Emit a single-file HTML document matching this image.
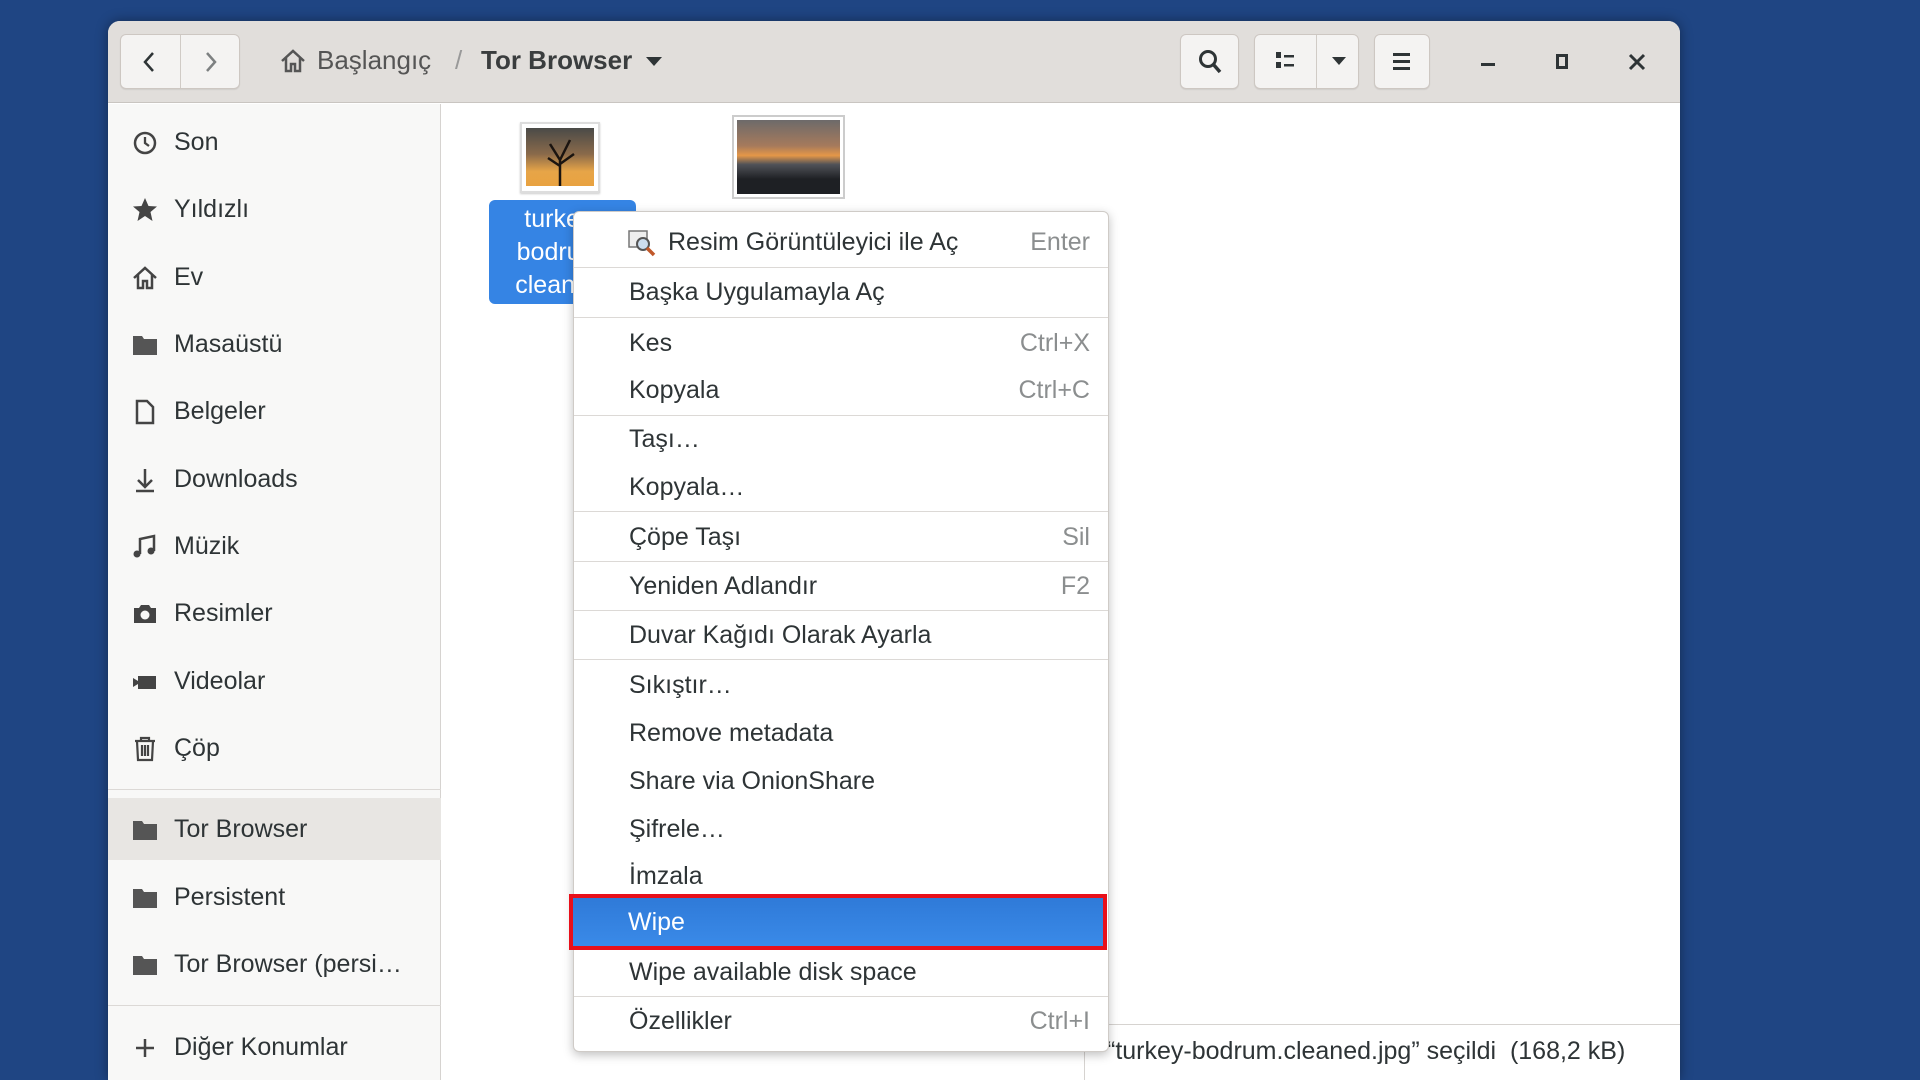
<!DOCTYPE html>
<html><head><meta charset="utf-8"><style>
*{margin:0;padding:0;box-sizing:border-box}
body{width:1920px;height:1080px;background:#1f4583;font-family:"Liberation Sans",sans-serif;position:relative;overflow:hidden;color:#2e3436}
.abs{position:absolute}
#win{left:108px;top:21px;width:1572px;height:1059px;background:#fff;border-radius:12px 12px 0 0;overflow:hidden;box-shadow:0 0 12px rgba(0,0,0,.4)}
#hdr{left:0;top:0;width:1572px;height:82px;background:#e1dedb;border-bottom:1px solid #c9c5c1}
.btn{position:absolute;background:#f4f3f2;border:1px solid #cdc7c2;border-radius:6px;box-shadow:0 1px 1px rgba(0,0,0,.08)}
#side{left:0;top:83px;width:333px;height:976px;background:#f8f8f7;border-right:1px solid #d6d3d0}
.si{position:absolute;left:0;width:333px;height:62px;font-size:25px;line-height:62px;padding-left:66px}
.si svg{position:absolute;left:24px;top:19px}
.sep{position:absolute;height:1px;background:#dcd9d6}
#menu{left:573px;top:211px;width:536px;height:841px;background:#fff;border:1px solid #cfcbc7;border-radius:6px;box-shadow:0 3px 10px rgba(0,0,0,.25)}
.mi{position:absolute;left:0;width:534px;font-size:25px;padding-left:55px;color:#2e3436;height:44px;line-height:44px}
.mi span{position:absolute;right:18px;color:#8b8e8f}
</style></head><body>
<div id="win" class="abs">
 <div id="hdr" class="abs">
  <div class="btn" style="left:12px;top:13px;width:120px;height:55px"></div>
  <div class="abs" style="left:72px;top:14px;width:1px;height:53px;background:#d0cbc6"></div>
  <svg class="abs" style="left:30px;top:28px" width="24" height="26"><path d="M15 4 L7 13 L15 22" stroke="#2e3436" stroke-width="2.5" fill="none"/></svg>
  <svg class="abs" style="left:90px;top:28px" width="24" height="26"><path d="M9 4 L17 13 L9 22" stroke="#7d8081" stroke-width="2.5" fill="none"/></svg>
  <svg class="abs" style="left:171px;top:26px" width="28" height="28"><path d="M3 14 L14 4 L25 14 M7 11 V24 H12 V17 H16 V24 H21 V11" stroke="#555" stroke-width="2.5" fill="none"/></svg>
  <div class="abs" style="left:209px;top:24px;font-size:26px;color:#555">Başlangıç</div>
  <div class="abs" style="left:347px;top:24px;font-size:26px;color:#999">/</div>
  <div class="abs" style="left:373px;top:24px;font-size:26px;font-weight:bold;color:#3a3d3e">Tor Browser</div>
  <svg class="abs" style="left:537px;top:33px" width="18" height="14"><path d="M1 3 H17 L9 12Z" fill="#2e3436"/></svg>
  <div class="btn" style="left:1072px;top:13px;width:59px;height:55px"></div>
  <svg class="abs" style="left:1088px;top:27px" width="28" height="28"><circle cx="12" cy="11" r="7.5" stroke="#2e3436" stroke-width="3" fill="none"/><path d="M17 16 L24 24" stroke="#2e3436" stroke-width="3.5"/></svg>
  <div class="btn" style="left:1146px;top:13px;width:105px;height:55px"></div>
  <div class="abs" style="left:1208px;top:14px;width:1px;height:53px;background:#d0cbc6"></div>
  <svg class="abs" style="left:1166px;top:29px" width="24" height="22"><rect x="2" y="2" width="5" height="6" fill="#2e3436"/><rect x="2" y="12" width="5" height="6" fill="#2e3436"/><rect x="10" y="5" width="10" height="2.5" fill="#2e3436"/><rect x="10" y="14" width="10" height="2.5" fill="#2e3436"/></svg>
  <svg class="abs" style="left:1222px;top:33px" width="18" height="14"><path d="M2 3 H16 L9 11Z" fill="#2e3436"/></svg>
  <div class="btn" style="left:1266px;top:13px;width:56px;height:55px"></div>
  <svg class="abs" style="left:1282px;top:28px" width="24" height="26"><rect x="3" y="4" width="17" height="3" fill="#2e3436"/><rect x="3" y="11" width="17" height="3" fill="#2e3436"/><rect x="3" y="18" width="17" height="3" fill="#2e3436"/></svg>
  <div class="abs" style="left:1373px;top:42px;width:14px;height:3px;background:#2e3436"></div>
  <div class="abs" style="left:1448px;top:33px;width:12px;height:15px;border:3px solid #2e3436"></div>
  <svg class="abs" style="left:1519px;top:31px" width="20" height="20"><path d="M3 3 L17 17 M17 3 L3 17" stroke="#2e3436" stroke-width="3"/></svg>
 </div>
 <div id="side" class="abs">
  <div class="si" style="top:7px"><svg width="26" height="26"><circle cx="13" cy="13" r="10" stroke="#444" stroke-width="2.5" fill="none"/><path d="M13 7 V13 L17 16" stroke="#444" stroke-width="2.3" fill="none"/></svg>Son</div>
  <div class="si" style="top:74px"><svg width="26" height="26"><path d="M13 1 L16.5 9 L25 9.5 L18.5 15 L20.5 24 L13 19 L5.5 24 L7.5 15 L1 9.5 L9.5 9Z" fill="#444"/></svg>Yıldızlı</div>
  <div class="si" style="top:142px"><svg width="26" height="26"><path d="M2 13 L13 3 L24 13 M6 10 V23 H11 V16 H15 V23 H20 V10" stroke="#444" stroke-width="2.5" fill="none"/></svg>Ev</div>
  <div class="si" style="top:209px"><svg width="26" height="26"><path d="M1 4 H10 L12 7 H25 V23 H1Z" fill="#555"/></svg>Masaüstü</div>
  <div class="si" style="top:276px"><svg width="26" height="26"><path d="M5 2 H15 L21 8 V24 H5Z" stroke="#444" stroke-width="2.5" fill="none"/></svg>Belgeler</div>
  <div class="si" style="top:344px"><svg width="26" height="26"><path d="M13 2 V20 M6 13 L13 20 L20 13 M4 24 H22" stroke="#444" stroke-width="2.5" fill="none"/></svg>Downloads</div>
  <div class="si" style="top:411px"><svg width="26" height="26"><path d="M8 20 V5 L22 2 V17" stroke="#444" stroke-width="2.5" fill="none"/><circle cx="5" cy="20" r="3.5" fill="#444"/><circle cx="19" cy="17" r="3.5" fill="#444"/></svg>Müzik</div>
  <div class="si" style="top:478px"><svg width="26" height="26"><path d="M2 7 H7 L9 4 H17 L19 7 H24 V22 H2Z" fill="#444"/><circle cx="13" cy="14" r="4.5" fill="#f8f8f7"/></svg>Resimler</div>
  <div class="si" style="top:546px"><svg width="26" height="26"><rect x="6" y="7" width="18" height="13" fill="#444"/><path d="M1 9 L6 12 V15 L1 18Z" fill="#444"/></svg>Videolar</div>
  <div class="si" style="top:613px"><svg width="26" height="26"><path d="M3 5 H23 M9 5 V2 H17 V5 M5 5 L6 24 H20 L21 5 M10 9 V20 M13 9 V20 M16 9 V20" stroke="#444" stroke-width="2.2" fill="none"/></svg>Çöp</div>
  <div class="sep" style="left:0;top:685px;width:333px"></div>
  <div class="si" style="top:694px;background:#e8e6e3"><svg width="26" height="26"><path d="M1 4 H10 L12 7 H25 V23 H1Z" fill="#555"/></svg>Tor Browser</div>
  <div class="si" style="top:762px"><svg width="26" height="26"><path d="M1 4 H10 L12 7 H25 V23 H1Z" fill="#555"/></svg>Persistent</div>
  <div class="si" style="top:829px"><svg width="26" height="26"><path d="M1 4 H10 L12 7 H25 V23 H1Z" fill="#555"/></svg>Tor Browser (persi…</div>
  <div class="sep" style="left:0;top:901px;width:333px"></div>
  <div class="si" style="top:912px"><svg width="26" height="26"><path d="M13 4 V22 M4 13 H22" stroke="#444" stroke-width="2.5"/></svg>Diğer Konumlar</div>
 </div>
 <div class="abs" style="left:412px;top:101px;width:80px;height:71px;background:#fff;border:2px solid #ddd;box-shadow:0 1px 2px rgba(0,0,0,.2)">
  <div style="position:absolute;left:4px;top:4px;width:68px;height:58px;background:linear-gradient(#4a4a48,#8a6a4a 45%,#e7a548 75%,#e8a240)"></div>
  <svg style="position:absolute;left:16px;top:6px" width="44" height="56"><path d="M22 56 V30 L12 14 M22 30 L32 10 M22 36 L10 28 M22 34 L36 24" stroke="#1a1410" stroke-width="2.5" fill="none"/></svg>
 </div>
 <div class="abs" style="left:624px;top:94px;width:113px;height:84px;background:#fff;border:2px solid #ccc">
  <div style="position:absolute;left:3px;top:3px;width:103px;height:74px;background:linear-gradient(#6d6a6a,#a67a5c 35%,#e59748 48%,#505258 60%,#1e2024 80%)"></div>
 </div>
 <div class="abs" style="left:381px;top:179px;width:147px;height:104px;background:#3584e4;border-radius:6px;color:#fff;font-size:25px;line-height:33px;text-align:center;padding-top:3px;overflow:hidden">turkey-<br>bodrum.<br>cleaned.</div>
 <div class="abs" style="left:976px;top:1003px;width:600px;height:60px;background:#fff;border-top:1px solid #d6d3d0;border-left:1px solid #d6d3d0"></div>
 <div class="abs" style="left:999px;top:1016px;font-size:25px;color:#2e3436">“turkey-bodrum.cleaned.jpg” seçildi&nbsp; (168,2 kB)</div>
</div>
<div id="menu" class="abs">
 <div class="mi" style="top:8px;padding-left:94px"><svg style="position:absolute;left:53px;top:9px" width="30" height="28"><rect x="2" y="2" width="18" height="16" fill="#eee" stroke="#777" stroke-width="1.5"/><circle cx="16" cy="15" r="6" fill="#cde" stroke="#555" stroke-width="2"/><path d="M20 19 L27 26" stroke="#c0582a" stroke-width="3.5"/></svg>Resim Görüntüleyici ile Aç<span>Enter</span></div>
 <div class="sep" style="left:0;top:55px;width:534px"></div>
 <div class="mi" style="top:58px">Başka Uygulamayla Aç</div>
 <div class="sep" style="left:0;top:105px;width:534px"></div>
 <div class="mi" style="top:109px">Kes<span>Ctrl+X</span></div>
 <div class="mi" style="top:156px">Kopyala<span>Ctrl+C</span></div>
 <div class="sep" style="left:0;top:203px;width:534px"></div>
 <div class="mi" style="top:205px">Taşı…</div>
 <div class="mi" style="top:253px">Kopyala…</div>
 <div class="sep" style="left:0;top:299px;width:534px"></div>
 <div class="mi" style="top:303px">Çöpe Taşı<span>Sil</span></div>
 <div class="sep" style="left:0;top:349px;width:534px"></div>
 <div class="mi" style="top:352px">Yeniden Adlandır<span>F2</span></div>
 <div class="sep" style="left:0;top:398px;width:534px"></div>
 <div class="mi" style="top:401px">Duvar Kağıdı Olarak Ayarla</div>
 <div class="sep" style="left:0;top:447px;width:534px"></div>
 <div class="mi" style="top:451px">Sıkıştır…</div>
 <div class="mi" style="top:499px">Remove metadata</div>
 <div class="mi" style="top:547px">Share via OnionShare</div>
 <div class="mi" style="top:595px">Şifrele…</div>
 <div class="mi" style="top:642px">İmzala</div>
 <div class="mi" style="top:738px">Wipe available disk space</div>
 <div class="sep" style="left:0;top:784px;width:534px"></div>
 <div class="mi" style="top:787px">Özellikler<span>Ctrl+I</span></div>
</div>
<div class="abs" style="left:569px;top:894px;width:538px;height:56px;border:4px solid #e8101a;background:linear-gradient(#2f7ad8,#3a8ae8)"></div>
<div class="abs" style="left:628px;top:900px;font-size:25px;line-height:44px;color:#fff">Wipe</div>
</body></html>
